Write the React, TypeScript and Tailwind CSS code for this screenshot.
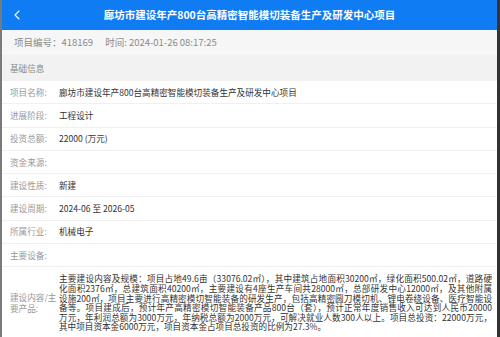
import { ChevronLeft } from "lucide-react";

type Row = {
  label: string;
  value: string;
};

const rows: Row[] = [
  { label: "项目名称:", value: "廊坊市建设年产800台高精密智能模切装备生产及研发中心项目" },
  { label: "进展阶段:", value: "工程设计" },
  { label: "投资总额:", value: "22000 (万元)" },
  { label: "资金来源:", value: "" },
  { label: "建设性质:", value: "新建" },
  { label: "建设周期:", value: "2024-06 至 2026-05" },
  { label: "所属行业:", value: "机械电子" },
  { label: "主要设备:", value: "" },
];

const contentLines = [
  "主要建设内容及规模：项目占地49.6亩（33076.02㎡），其中建筑占地面积30200㎡，绿化面积500.02㎡，道路硬",
  "化面积2376㎡，总建筑面积40200㎡，主要建设有4座生产车间共28000㎡，总部研发中心12000㎡，及其他附属",
  "设施200㎡，项目主要进行高精密模切智能装备的研发生产，包括高精密圆刀模切机、锂电卷绕设备、医疗智能设",
  "备等。项目建成后，预计年产高精密模切智能装备产品800台（套），预计正常年度销售收入可达到人民币20000",
  "万元，年利润总额为3000万元，年纳税总额为2000万元，可解决就业人数300人以上。项目总投资：22000万元，",
];

function App() {
  return (
    <div
      className="h-[337px] w-[500px] overflow-hidden border-l-2 border-r-[3px] border-l-[#7a7a7a] border-r-[#333] bg-white"
      style={{ fontFamily: '"Noto Sans CJK SC", "Noto Sans", sans-serif' }}
    >
      {/* Header */}
      <div className="relative flex h-[30px] items-center justify-center bg-[#0f7cf4]">
        <ChevronLeft className="absolute left-[7px] top-[7px] text-white" size={16} strokeWidth={1.6} />
        <h1 className="text-[10.5px] font-bold text-white">
          廊坊市建设年产800台高精密智能模切装备生产及研发中心项目
        </h1>
      </div>

      {/* Meta */}
      <div className="flex h-[25px] items-center gap-[12px] bg-[#f6f6f6] pl-[12px] text-[9.5px] text-[#8a8a8a]">
        <span>项目编号：418169</span>
        <span>时间: 2024-01-26 08:17:25</span>
      </div>

      <div className="flex h-[26px] items-center bg-[#f2f2f2] pl-[8px] text-[8.6px] text-[#8a8a8a]">
        基础信息
      </div>

      {/* Rows */}
      {rows.map((row) => (
        <div
          key={row.label}
          className="flex h-[23.3px] items-center border-b border-[#f0f0f0] pl-[8px] text-[8.6px]"
        >
          <span className="w-[49px] shrink-0 text-[#999]">{row.label}</span>
          <span className="text-[#333]">{row.value}</span>
        </div>
      ))}

      <div className="flex items-center pl-[8px] pr-[5px] pt-[7px] text-[8.6px]">
        <span className="w-[49px] shrink-0 leading-[11px] text-[#999]">建设内容/主要产品:</span>
        <div className="min-w-0 flex-1 leading-[9.6px] text-[#333]">
          {contentLines.map((line) => (
            <div key={line} className="whitespace-nowrap text-justify [text-align-last:justify]">
              {line}
            </div>
          ))}
          <div className="whitespace-nowrap">其中项目资本金6000万元，项目资本金占项目总投资的比例为27.3%。</div>
        </div>
      </div>
    </div>
  );
}

export default App;
